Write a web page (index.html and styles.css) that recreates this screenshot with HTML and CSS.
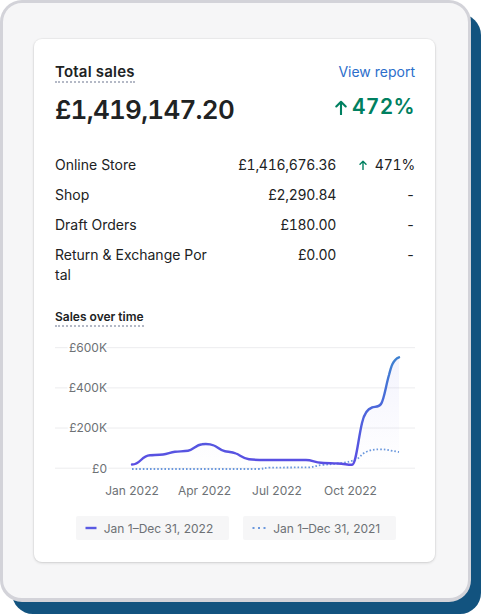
FILE: index.html
```html
<!DOCTYPE html>
<html lang="en">
<head>
<meta charset="utf-8">
<title>Total sales</title>
<link rel="stylesheet" href="styles.css">
</head>
<body>
<div class="stage">
  <div class="frame">
    <section class="card">
      <header class="card-head">
        <h2 class="title">Total sales</h2>
        <a class="link" href="#">View report</a>
      </header>
      <div class="headline">
        <span class="total">£1,419,147.20</span>
        <span class="delta">
          <svg class="delta-arrow" width="12" height="15" viewBox="0 0 12 15"><path d="M6 14.5V1.8M1.3 6.5L6 1.8L10.7 6.5" fill="none" stroke="#008060" stroke-width="2.1" stroke-linecap="round" stroke-linejoin="round"/></svg>
          <span>472%</span>
        </span>
      </div>
      <div class="breakdown">
        <div class="cell label">Online Store</div>
        <div class="cell amount">£1,416,676.36</div>
        <div class="cell pct"><svg class="row-arrow" width="8" height="10" viewBox="0 0 8 10"><path d="M4 9.5V1.2M1 4.2L4 1.2L7 4.2" fill="none" stroke="#008060" stroke-width="1.4" stroke-linecap="round" stroke-linejoin="round"/></svg><span>471%</span></div>
        <div class="cell label">Shop</div>
        <div class="cell amount">£2,290.84</div>
        <div class="cell pct">-</div>
        <div class="cell label">Draft Orders</div>
        <div class="cell amount">£180.00</div>
        <div class="cell pct">-</div>
        <div class="cell label">Return &amp; Exchange Portal</div>
        <div class="cell amount">£0.00</div>
        <div class="cell pct">-</div>
      </div>
      <h3 class="subtitle">Sales over time</h3>
      <svg class="chart" width="360" height="163" viewBox="55 337 360 163">
        <defs>
          <linearGradient id="lineGrad" gradientUnits="userSpaceOnUse" x1="0" y1="466" x2="0" y2="355">
            <stop offset="0" stop-color="#5a4de3"/>
            <stop offset="0.45" stop-color="#4f63dc"/>
            <stop offset="1" stop-color="#3d82d0"/>
          </linearGradient>
          <linearGradient id="areaGrad" gradientUnits="userSpaceOnUse" x1="0" y1="355" x2="0" y2="468">
            <stop offset="0" stop-color="#5a5ae6" stop-opacity="0.07"/>
            <stop offset="1" stop-color="#5a5ae6" stop-opacity="0"/>
          </linearGradient>
        </defs>
        <g class="grid">
          <line x1="55" y1="347.7" x2="415" y2="347.7"/>
          <line x1="55" y1="387.9" x2="415" y2="387.9"/>
          <line x1="55" y1="428" x2="415" y2="428"/>
          <line x1="55" y1="468.2" x2="415" y2="468.2"/>
        </g>
        <g class="ylab">
          <text x="107" y="352">£600K</text>
          <text x="107" y="392.2">£400K</text>
          <text x="107" y="432.3">£200K</text>
          <text x="107" y="472.5">£0</text>
        </g>
        <path class="area" d="M132,464.5 C136,464.5 138,463 141,460 C144,457 146,455.5 150,455.3 C155,455 159,455 163,454.5 C168,454 170,452.3 175,451.8 C180,451.3 184,451.5 188,450.8 C193,450 196,444.8 202,444.2 C206,443.7 210,443.8 214,445.5 C218,447 220,450.5 225,451.3 C229,452 232,451.8 236,453.5 C240,455 243,458.5 249,459.3 C255,460 260,460 266,460 L306,460 C312,460 315,462.5 321,462.8 C327,463.2 332,463.3 338,463.5 C344,463.7 348,465 352,464.8 C356,464.6 358,440 362,423 C364,414 367,409 372,407.5 C376,406.5 379,407 381,404 C384,400 386,385 389,375 C391,367 393,359.5 399,357.3 L399,468 L132,468 Z"/>
        <path class="prev" d="M132,469 L258,469 C263,469 265,467.8 270,467.6 L308,467.4 C313,467.4 316,465.5 322,465 C330,464.3 336,463.8 342,463 C348,462 352,461 356,459.5 C360,458 362,453 367,451.5 C371,450 374,449.3 380,449.3 C386,449.3 390,450.5 399,452"/>
        <path class="cur" d="M132,464.5 C136,464.5 138,463 141,460 C144,457 146,455.5 150,455.3 C155,455 159,455 163,454.5 C168,454 170,452.3 175,451.8 C180,451.3 184,451.5 188,450.8 C193,450 196,444.8 202,444.2 C206,443.7 210,443.8 214,445.5 C218,447 220,450.5 225,451.3 C229,452 232,451.8 236,453.5 C240,455 243,458.5 249,459.3 C255,460 260,460 266,460 L306,460 C312,460 315,462.5 321,462.8 C327,463.2 332,463.3 338,463.5 C344,463.7 348,465 352,464.8 C356,464.6 358,440 362,423 C364,414 367,409 372,407.5 C376,406.5 379,407 381,404 C384,400 386,385 389,375 C391,367 393,359.5 399,357.3"/>
        <g class="xlab">
          <text x="132" y="495">Jan 2022</text>
          <text x="204.5" y="495">Apr 2022</text>
          <text x="277" y="495">Jul 2022</text>
          <text x="350.5" y="495">Oct 2022</text>
        </g>
      </svg>
      <div class="legend">
        <div class="pill">
          <svg class="key" width="12" height="4" viewBox="0 0 12 4"><line x1="0.5" y1="2" x2="11.5" y2="2" stroke="#5a5ae3" stroke-width="2.4"/></svg>
          <span>Jan 1–Dec 31, 2022</span>
        </div>
        <div class="pill">
          <svg class="key" width="14" height="4" viewBox="0 0 14 4"><line x1="0.5" y1="2" x2="13.5" y2="2" stroke="#6b98dd" stroke-width="2" stroke-dasharray="2 3.5"/></svg>
          <span>Jan 1–Dec 31, 2021</span>
        </div>
      </div>
    </section>
  </div>
</div>
</body>
</html>
```

FILE: styles.css
```css
* { box-sizing: border-box; }

html, body {
  margin: 0;
  padding: 0;
  background: #ffffff;
}

body {
  font-family: Inter, "Noto Sans", "Liberation Sans", sans-serif;
  color: #202223;
  width: 481px;
  height: 616px;
  overflow: hidden;
}

.stage {
  width: 481px;
  height: 616px;
}

.frame {
  width: 471px;
  height: 602px;
  border: 3px solid #d3d3d9;
  border-bottom-width: 4px;
  border-radius: 22px;
  background: #f6f6f7;
  box-shadow: 11px 13px 0 -1px #12537f;
  padding: 36px 0 0 31px;
}

.card {
  width: 401px;
  background: #ffffff;
  border-radius: 8px;
  padding: 24px 20px 22px 21px;
  box-shadow: 0 0 0 1px rgba(0, 0, 0, 0.03), 0 1px 3px rgba(0, 0, 0, 0.14);
}

.card-head {
  display: flex;
  justify-content: space-between;
  align-items: baseline;
}

.title {
  margin: 0;
  font-size: 15px;
  line-height: 18px;
  font-weight: 600;
  letter-spacing: 0.2px;
  color: #202223;
  border-bottom: 2px dotted #b4b9c6;
}

.link {
  font-size: 14px;
  line-height: 18px;
  color: #2c6ecb;
  text-decoration: none;
}

.headline {
  margin-top: 11px;
  display: flex;
  justify-content: space-between;
  align-items: flex-start;
}

.total {
  font-size: 26px;
  line-height: 32px;
  font-weight: 600;
  font-variant-numeric: tabular-nums;
  letter-spacing: -0.75px;
  color: #202223;
}

.delta {
  display: flex;
  align-items: center;
  gap: 5px;
  padding-top: 1px;
  font-size: 21px;
  line-height: 24px;
  font-weight: 600;
  letter-spacing: 0.3px;
  font-variant-numeric: tabular-nums;
  color: #008060;
}

.delta-arrow { display: block; margin-top: 1px; }

.breakdown {
  margin-top: 24px;
  display: grid;
  grid-template-columns: 155px 1fr 79px;
  font-size: 14px;
  line-height: 20px;
}

.cell {
  padding: 5px 0;
}

.label {
  word-break: break-all;
}

.amount {
  text-align: right;
  font-variant-numeric: tabular-nums;
  letter-spacing: -0.3px;
}

.pct {
  display: flex;
  justify-content: flex-end;
  align-items: center;
  gap: 8px;
  height: 30px;
  font-variant-numeric: tabular-nums;
  letter-spacing: -0.2px;
}

.row-arrow { display: block; }

.subtitle {
  margin: 19px 0 0;
  display: inline-block;
  font-size: 12px;
  line-height: 16px;
  font-weight: 600;
  color: #202223;
  border-bottom: 2px dotted #b4b9c6;
}

.chart {
  display: block;
  margin-top: 10px;
  overflow: visible;
}

.grid line {
  stroke: #ececee;
  stroke-width: 1;
}

.ylab text {
  font-family: Inter, "Noto Sans", sans-serif;
  font-size: 12px;
  fill: #6d7175;
  text-anchor: end;
  stroke: #ffffff;
  stroke-width: 4px;
  paint-order: stroke;
}

.xlab text {
  font-family: Inter, "Noto Sans", sans-serif;
  font-size: 12px;
  fill: #6d7175;
  text-anchor: middle;
}

.area {
  fill: url(#areaGrad);
  stroke: none;
}

.cur {
  fill: none;
  stroke: url(#lineGrad);
  stroke-width: 2.4;
  stroke-linecap: round;
  stroke-linejoin: round;
}

.prev {
  fill: none;
  stroke: #6b98dd;
  stroke-width: 1.8;
  stroke-dasharray: 1.6 2;
}

.legend {
  margin-top: 16px;
  display: flex;
  justify-content: center;
  gap: 14px;
  padding-left: 2px;
}

.pill {
  display: flex;
  align-items: center;
  gap: 7px;
  height: 24px;
  padding: 0 16px 0 9px;
  background: #f6f6f7;
  border-radius: 2px;
  font-size: 12px;
  color: #6d7175;
}

.key { display: block; }
```
